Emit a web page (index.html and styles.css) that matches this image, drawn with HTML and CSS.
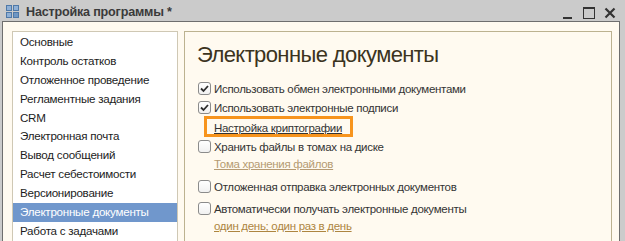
FILE: index.html
```html
<!DOCTYPE html>
<html lang="ru">
<head>
<meta charset="utf-8">
<link rel="stylesheet" href="styles.css">
</head>
<body>
<div class="window">
  <div class="titlebar">
    <svg class="app-icon" width="13" height="13" viewBox="0 0 13 13">
      <rect x="0.5" y="0.5" width="5" height="5" fill="#8fb0d6" stroke="#4f79a8"/>
      <rect x="7.5" y="0.5" width="5" height="5" fill="#8fb0d6" stroke="#4f79a8"/>
      <rect x="0.5" y="7.5" width="5" height="5" fill="#8fb0d6" stroke="#4f79a8"/>
      <rect x="7.5" y="7.5" width="5" height="5" fill="#6f97c4" stroke="#4f79a8"/>
    </svg>
    <span class="title">Настройка программы *</span>
    <div class="controls">
      <svg width="12" height="14" viewBox="0 0 12 14"><rect x="1" y="11" width="9" height="2" fill="#333"/></svg>
      <svg width="14" height="14" viewBox="0 0 14 14"><rect x="1.5" y="1.5" width="11" height="11" fill="none" stroke="#333" stroke-width="1"/><rect x="1" y="1" width="12" height="2" fill="#333"/></svg>
      <svg width="12" height="14" viewBox="0 0 12 14"><path d="M1.5 2.5 L10.5 11.5 M10.5 2.5 L1.5 11.5" stroke="#333" stroke-width="2.2"/></svg>
    </div>
  </div>
  <div class="frame">
    <ul class="nav">
      <li>Основные</li>
      <li>Контроль остатков</li>
      <li>Отложенное проведение</li>
      <li>Регламентные задания</li>
      <li>CRM</li>
      <li>Электронная почта</li>
      <li>Вывод сообщений</li>
      <li>Расчет себестоимости</li>
      <li>Версионирование</li>
      <li class="selected">Электронные документы</li>
      <li>Работа с задачами</li>
    </ul>
    <div class="panel">
      <h1 class="heading">Электронные документы</h1>
      <label class="check-row"><span class="box checked"><svg width="11" height="11" viewBox="0 0 11 11"><path d="M2 5.5 L4.5 8 L9 3" fill="none" stroke="#2d2d2d" stroke-width="1.8"/></svg></span>Использовать обмен электронными документами</label>
      <label class="check-row"><span class="box checked"><svg width="11" height="11" viewBox="0 0 11 11"><path d="M2 5.5 L4.5 8 L9 3" fill="none" stroke="#2d2d2d" stroke-width="1.8"/></svg></span>Использовать электронные подписи</label>
      <div class="highlight"><a class="link dark">Настройка криптографии</a></div>
      <label class="check-row"><span class="box"></span>Хранить файлы в томах на диске</label>
      <div class="link-row"><a class="link muted">Тома хранения файлов</a></div>
      <label class="check-row gap-sm"><span class="box"></span>Отложенная отправка электронных документов</label>
      <label class="check-row gap-lg"><span class="box"></span>Автоматически получать электронные документы</label>
      <div class="link-row"><a class="link warm">один день; один раз в день</a></div>
    </div>
  </div>
</div>
</body>
</html>
```
FILE: styles.css
```css
html, body {
  margin: 0;
  padding: 0;
  background: #cbcbcb;
  width: 625px;
  height: 241px;
  overflow: hidden;
  font-family: "Liberation Sans", Arial, sans-serif;
}
.window {
  width: 625px;
  height: 241px;
  display: flex;
  flex-direction: column;
}
.titlebar {
  height: 21px;
  display: flex;
  align-items: center;
  padding-left: 6px;
  padding-right: 9px;
  box-sizing: border-box;
  background: #cbcbcb;
}
.app-icon {
  margin-top: 1px;
}
.title {
  margin-left: 7px;
  font-weight: bold;
  font-size: 12.6px;
  letter-spacing: -0.2px;
  color: #3a3a3a;
  margin-top: 2px;
}
.controls {
  margin-left: auto;
  display: flex;
  gap: 8px;
  align-items: center;
  margin-top: 4px;
}
.frame {
  margin-left: 2px;
  width: 618px;
  flex: 1;
  box-sizing: border-box;
  border: 1px solid #6e6e6e;
  border-bottom: none;
  background: #fffaf0;
  display: flex;
  padding: 9px 7px 0 9px;
  gap: 6px;
}
.nav {
  list-style: none;
  margin: 0;
  padding: 1px 0 0;
  width: 166px;
  box-sizing: border-box;
  background: #fff;
  border: 1px solid #cfc8b4;
  border-bottom: none;
  font-size: 11.6px;
  letter-spacing: -0.25px;
  color: #1c1c1c;
}
.nav li {
  height: 18.9px;
  line-height: 18.9px;
  padding-left: 7px;
  white-space: nowrap;
}
.nav li.selected {
  background: #7097cc;
  color: #fff;
}
.panel {
  flex: 1;
  box-sizing: border-box;
  border: 1px solid #bcb290;
  border-bottom: none;
  padding: 10px 0 0 13px;
  display: flex;
  flex-direction: column;
  align-items: flex-start;
  color: #333;
  font-size: 11.5px;
  letter-spacing: -0.3px;
}
.heading {
  margin: 0 0 11px -1px;
  font-weight: normal;
  font-size: 22px;
  letter-spacing: -0.6px;
  line-height: 26px;
  color: #3b3320;
}
.check-row {
  height: 19px;
  display: flex;
  align-items: center;
  white-space: nowrap;
}
.box {
  width: 13px;
  height: 13px;
  box-sizing: border-box;
  border: 1px solid #8b8b8b;
  border-radius: 3px;
  background: linear-gradient(#ffffff, #f1f1f1);
  margin-right: 3px;
  display: flex;
  align-items: center;
  justify-content: center;
}
.highlight {
  margin: -1px 0 0 6px;
  border: 3px solid #f7941d;
  height: 21px;
  box-sizing: border-box;
  padding: 0 8px 0 7px;
  display: flex;
  align-items: center;
}
.link {
  text-decoration: underline;
  white-space: nowrap;
}
.link.dark {
  color: #333;
  padding-top: 3px;
}
.link.muted {
  color: #b59a72;
}
.link.warm {
  color: #ad8540;
}
.link-row {
  height: 19px;
  box-sizing: border-box;
  padding: 0 0 3px 16px;
  display: flex;
  align-items: center;
}
.gap-sm {
  margin-top: 2px;
}
.gap-lg {
  margin-top: 3px;
}
```
